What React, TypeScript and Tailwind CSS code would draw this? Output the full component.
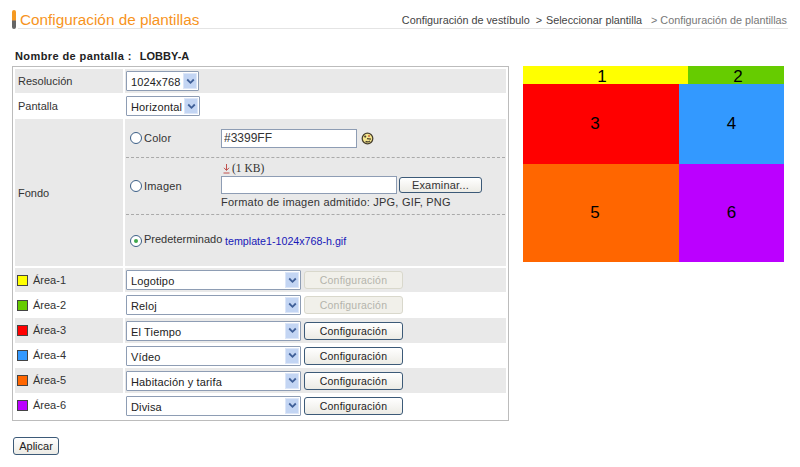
import React from 'react';

const font = { sans: "font-['Liberation_Sans',Arial,sans-serif]" };

const ChevronBox = () => (
  <span className="absolute right-[1px] top-[1px] bottom-[1px] w-[14px] bg-[#c3d5f3] border border-[#dce6f8] flex items-center justify-center pointer-events-none">
    <svg width="9" height="7" viewBox="0 0 9 7">
      <path d="M1.2 1.5 L4.5 4.8 L7.8 1.5" fill="none" stroke="#3f5f98" strokeWidth="1.8" />
    </svg>
  </span>
);

const Dropdown = ({ value, width }: { value: string; width: string }) => (
  <div className={`relative h-[20px] ${width} bg-white border border-[#8e9db4] rounded-[1px]`}>
    <div className="pl-[4px] pt-[2px] text-[11px] leading-[16px] tracking-[0.15px] text-[#222]">{value}</div>
    <ChevronBox />
  </div>
);

const ConfigButton = ({ disabled, label = 'Configuración' }: { disabled?: boolean; label?: string }) => (
  <button
    disabled={disabled}
    className={
      disabled
        ? 'h-[18px] w-[99px] rounded-[3px] border border-[#d9d8cc] bg-[#f1f0ea] text-[#b4b4ac] text-[10.5px] leading-[14px] tracking-[0.2px]'
        : 'h-[18px] w-[99px] rounded-[3px] border border-[#3c5a78] bg-gradient-to-b from-white to-[#ecebe5] text-[#222] text-[10.5px] leading-[14px] tracking-[0.2px]'
    }
  >
    {label}
  </button>
);

const Radio = ({ checked }: { checked?: boolean }) => (
  <span className="w-[12px] h-[12px] rounded-full border border-[#3c5f87] bg-white flex items-center justify-center shrink-0">
    {checked && <span className="w-[4px] h-[4px] rounded-full bg-[#3fa84c]" />}
  </span>
);

const PaletteIcon = () => (
  <svg width="13" height="13" viewBox="0 0 13 13" className="ml-[4px]">
    <circle cx="6.5" cy="6.5" r="5.3" fill="#f5e68e" stroke="#4a4230" strokeWidth="1.3" />
    <circle cx="4.2" cy="4.6" r="1.1" fill="#4a4230" />
    <circle cx="8" cy="3.9" r="1" fill="#c9673a" />
    <path d="M6 6.6 L10 7.2 M4.6 9.4 C6.2 10.2 8 9.8 9 8.8" fill="none" stroke="#4a4230" strokeWidth="1.2" />
  </svg>
);

const areas = [
  { name: 'Área-1', color: 'bg-[#ffff00]', value: 'Logotipo', disabled: true, bg: 'bg-[#e9e9e9]', h: 'h-[24px]' },
  { name: 'Área-2', color: 'bg-[#66cc00]', value: 'Reloj', disabled: true, bg: 'bg-white', h: 'h-[26px]' },
  { name: 'Área-3', color: 'bg-[#ff0000]', value: 'El Tiempo', bg: 'bg-[#e9e9e9]', h: 'h-[25px]' },
  { name: 'Área-4', color: 'bg-[#3399ff]', value: 'Vídeo', bg: 'bg-white', h: 'h-[25px]' },
  { name: 'Área-5', color: 'bg-[#ff6600]', value: 'Habitación y tarifa', bg: 'bg-[#e9e9e9]', h: 'h-[25px]' },
  { name: 'Área-6', color: 'bg-[#bb00ff]', value: 'Divisa', bg: 'bg-white', h: 'h-[25px]' },
];

export default function App() {
  return (
    <div className={`${font.sans} w-[800px] h-[467px] bg-white overflow-hidden text-[#333] text-[11px]`}>
      {/* page heading */}
      <div className="flex items-start pl-[12px] pr-[12px] pt-[10px]">
        <div className="w-[4px] h-[19px] rounded-[2px] bg-gradient-to-b from-[#f59a23] from-50% to-[#666] to-60% shrink-0" />
        <div className="ml-[2px] flex-1 h-[19px] border-b border-[#e4e4e4] flex items-center justify-between">
          <h1 className="ml-[2px] mt-[1px] text-[15.3px] leading-[18px] text-[#f7941d]">Configuración de plantillas</h1>
          <div className="flex text-[#444] text-[10.8px] mt-[3px] mr-[1px]">
            <span>Configuración de vestíbulo</span>
            <span className="ml-[6px]">&gt;</span>
            <span className="ml-[4px]">Seleccionar plantilla</span>
            <span className="ml-[9px] text-[#777]">&gt; Configuración de plantillas</span>
          </div>
        </div>
      </div>

      <div className="flex pl-[12px] mt-[19px]">
        {/* form */}
        <div className="w-[497px] shrink-0">
          <div className="pl-[3px] h-[18px] font-bold text-[11px] leading-[16px] text-[#222] flex">
            <span className="tracking-[0.4px]">Nombre de pantalla :</span>
            <span className="ml-[8px]">LOBBY-A</span>
          </div>
          <div className="border border-[#bcbcbc] px-[2px] pt-[2px] h-[355px]">
            <div className="flex h-[24px] bg-[#e9e9e9] items-center">
              <div className="w-[110px] pl-[3px] border-r-2 border-white h-full flex items-center">Resolución</div>
              <div className="pl-[1px]"><Dropdown value="1024x768" width="w-[73px]" /></div>
            </div>
            <div className="flex h-[26px] items-center">
              <div className="w-[110px] pl-[3px] h-full flex items-center">Pantalla</div>
              <div className="pl-[1px]"><Dropdown value="Horizontal" width="w-[74px]" /></div>
            </div>
            <div className="flex h-[147px] mb-[2px] bg-[#e9e9e9]">
              <div className="w-[110px] pl-[3px] pt-[2px] border-r-2 border-white flex items-center">Fondo</div>
              <div className="flex-1 text-[#333]">
                <div className="h-[39px] mx-[1px] border-b border-dashed border-[#aaa] flex items-center pl-[4px]">
                  <Radio />
                  <span className="ml-[2px] w-[77px] tracking-[0.2px]">Color</span>
                  <input
                    readOnly
                    value="#3399FF"
                    className="w-[136px] h-[19px] border border-[#8e9db4] bg-white pl-[2px] text-[12px] text-[#333] outline-none"
                  />
                  <PaletteIcon />
                </div>
                <div className="h-[57px] mx-[1px] border-b border-dashed border-[#aaa] flex items-center pl-[4px]">
                  <Radio />
                  <span className="ml-[2px] w-[77px] tracking-[0.2px]">Imagen</span>
                  <div className="flex flex-col">
                    <div className="flex items-center h-[12px] pl-[2px]">
                      <svg width="7" height="10" viewBox="0 0 7 10">
                        <path d="M3.5 0 V6 M1 3.8 L3.5 6.5 L6 3.8 M0.5 9 H6.5" fill="none" stroke="#c0504d" strokeWidth="1" />
                      </svg>
                      <span className="ml-[2px] font-['Liberation_Serif',serif] text-[11.5px] text-[#333]">(1 KB)</span>
                    </div>
                    <div className="flex items-center h-[20px]">
                      <input readOnly className="w-[176px] h-[18px] border border-[#8e9db4] bg-white outline-none" />
                      <div className="ml-[2px]"><button className="h-[16px] w-[83px] rounded-[3px] border border-[#3c5a78] bg-gradient-to-b from-white to-[#ecebe5] text-[11px] leading-[13px] tracking-[0.2px] text-[#333]">Examinar...</button></div>
                    </div>
                    <div className="h-[14px] leading-[14px] tracking-[0.22px]">Formato de imagen admitido: JPG, GIF, PNG</div>
                  </div>
                </div>
                <div className="h-[51px] flex items-center pl-[5px]">
                  <Radio checked />
                  <span className="ml-[2px] w-[81px] mt-[-2px]">Predeterminado</span>
                  <span className="text-[10.7px] text-[#1818b8] mt-[1px]">template1-1024x768-h.gif</span>
                </div>
              </div>
            </div>
            {areas.map((a) => (
              <div key={a.name} className={`flex items-center ${a.h} ${a.bg}`}>
                <div className={`w-[110px] h-full pl-[2px] flex items-center ${a.bg === 'bg-white' ? '' : 'border-r-2 border-white'}`}>
                  <span className={`w-[11px] h-[11px] border border-[#444] ${a.color}`} />
                  <span className="ml-[5px]">{a.name}</span>
                </div>
                <div className="pl-[1px]"><Dropdown value={a.value} width="w-[175px]" /></div>
                <div className="ml-[3px]"><ConfigButton disabled={a.disabled} /></div>
              </div>
            ))}
          </div>
          <button className="mt-[16px] ml-[1px] h-[18px] w-[46px] rounded-[3px] border border-[#3c5a78] bg-gradient-to-b from-white to-[#ecebe5] text-[11px] leading-[14px] text-[#222]">
            Aplicar
          </button>
        </div>

        {/* template preview */}
        <div className="ml-[14px] mt-[18px] w-[261px] text-black text-[17px]">
          <div className="flex h-[18px] leading-[22px]">
            <div className="w-[165px] bg-[#ffff00] text-center pr-[7px]">1</div>
            <div className="flex-1 bg-[#66cc00] text-center pl-[4px]">2</div>
          </div>
          <div className="flex h-[80px] leading-[80px]">
            <div className="w-[156px] bg-[#ff0000] text-center pr-[12px]">3</div>
            <div className="flex-1 bg-[#3399ff] text-center">4</div>
          </div>
          <div className="flex h-[98px] leading-[98px]">
            <div className="w-[156px] bg-[#ff6600] text-center pr-[12px]">5</div>
            <div className="flex-1 bg-[#bb00ff] text-center">6</div>
          </div>
        </div>
      </div>
    </div>
  );
}
